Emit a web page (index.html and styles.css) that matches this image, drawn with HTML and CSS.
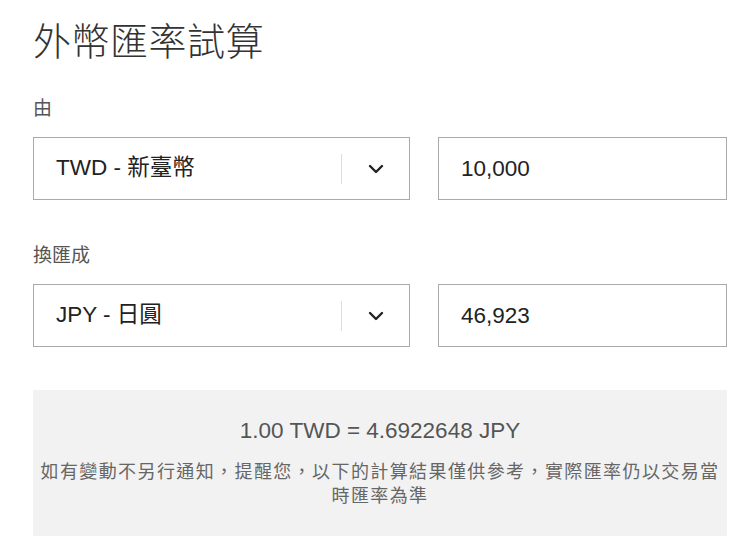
FILE: index.html
```html
<!DOCTYPE html>
<html lang="zh-Hant">
<head>
<meta charset="utf-8">
<link rel="stylesheet" href="styles.css">
</head>
<body>
<div class="page">
  <h1 class="title">外幣匯率試算</h1>

  <div class="label label-from">由</div>
  <div class="row">
    <div class="select">
      <span class="select-text">TWD - 新臺幣</span>
      <span class="select-arrow">
        <svg width="16" height="10" viewBox="0 0 16 10"><path d="M2 2 L8 8 L14 2" fill="none" stroke="#222" stroke-width="2.4" stroke-linecap="round" stroke-linejoin="round"/></svg>
      </span>
    </div>
    <div class="input">10,000</div>
  </div>

  <div class="label label-to">換匯成</div>
  <div class="row">
    <div class="select">
      <span class="select-text">JPY - 日圓</span>
      <span class="select-arrow">
        <svg width="16" height="10" viewBox="0 0 16 10"><path d="M2 2 L8 8 L14 2" fill="none" stroke="#222" stroke-width="2.4" stroke-linecap="round" stroke-linejoin="round"/></svg>
      </span>
    </div>
    <div class="input">46,923</div>
  </div>

  <div class="result">
    <div class="rate">1.00 TWD = 4.6922648 JPY</div>
    <p class="note">如有變動不另行通知，提醒您，以下的計算結果僅供參考，實際匯率仍以交易當時匯率為準</p>
  </div>
</div>
</body>
</html>
```

FILE: styles.css
```css
html, body {
  margin: 0;
  padding: 0;
  background: #fff;
}

body {
  font-family: "Liberation Sans", "Noto Sans CJK TC", sans-serif;
  color: #333;
}

.page {
  width: 694px;
  margin-left: 33px;
}

.title {
  margin: 19px 0 0;
  font-size: 38px;
  line-height: 46px;
  font-weight: 300;
  color: #333;
  letter-spacing: 0.5px;
}

.label {
  font-size: 19px;
  line-height: 28px;
  color: #555;
  margin-bottom: 14px;
}

.label-from {
  margin-top: 30px;
}

.label-to {
  margin-top: 42px;
}

.row {
  display: flex;
  gap: 28px;
  height: 63px;
}

.select {
  box-sizing: border-box;
  width: 377px;
  height: 63px;
  border: 1px solid #aaa;
  display: flex;
  align-items: center;
  background: #fff;
}

.select-text {
  flex: 1;
  padding-left: 22px;
  font-size: 22.5px;
  line-height: 1;
  color: #222;
}

.select-arrow {
  width: 66px;
  height: 30px;
  border-left: 1px solid #ddd;
  display: flex;
  align-items: center;
  justify-content: center;
  padding-left: 1px;
}

.select-arrow svg {
  display: block;
}

.input {
  box-sizing: border-box;
  flex: 1;
  height: 63px;
  border: 1px solid #aaa;
  display: flex;
  align-items: center;
  padding-left: 22px;
  font-size: 22.5px;
  color: #222;
}

.result {
  margin-top: 43px;
  box-sizing: border-box;
  height: 146px;
  background: #f2f2f2;
  padding: 28px 0 0;
  text-align: center;
}

.rate {
  font-size: 22.5px;
  line-height: 26px;
  color: #555;
}

.note {
  margin: 16px 0 0;
  font-size: 18px;
  line-height: 24px;
  letter-spacing: 1.4px;
  color: #666;
}
```
